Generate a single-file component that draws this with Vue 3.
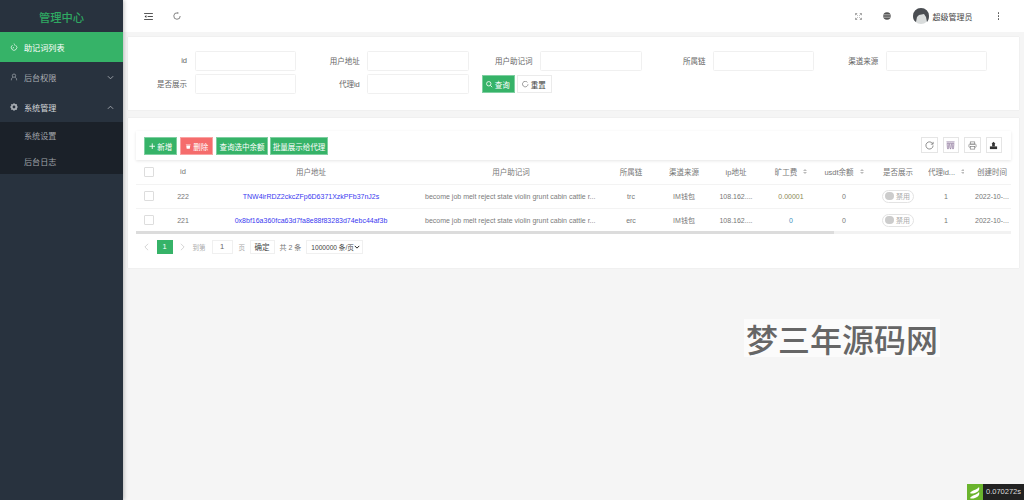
<template>
  <div class="layout">
    <aside class="side">
      <div class="logo">管理中心</div>
      <a class="menu-item active">
        <svg class="mi" viewBox="0 0 12 12"><path d="M6 .8c.4 1.400 1.300 1.800 1.300 3M3.800 3.200A4.200 4.200 0 1 0 8.600 3.400M6 6.500a1.500 1.500 0 0 0-1.500 1.600" fill="none" stroke="currentColor" stroke-width="1"/></svg>
        <span>助记词列表</span>
      </a>
      <a class="menu-item">
        <svg class="mi" viewBox="0 0 12 12"><circle cx="6" cy="4" r="2.500" fill="none" stroke="currentColor"/><path d="M2 11c0-3 1-4 2.500-4.500M10 11c0-3-1-4-2.500-4.500" fill="none" stroke="currentColor"/></svg>
        <span>后台权限</span>
        <svg class="arrow" viewBox="0 0 8 8"><path d="M1 2.500l3 3 3-3" fill="none" stroke="currentColor"/></svg>
      </a>
      <a class="menu-item">
        <svg class="mi" viewBox="0 0 12 12"><circle cx="6" cy="6" r="3.500" fill="none" stroke="currentColor" stroke-width="2.800"/><path d="M6 .3v2M6 9.700v2M.3 6h2M9.700 6h2M2 2l1.400 1.400M8.600 8.600L10 10M2 10l1.400-1.400M8.600 3.400L10 2" stroke="currentColor" stroke-width="1.500"/></svg>
        <span class="strong">系统管理</span>
        <svg class="arrow" viewBox="0 0 8 8"><path d="M1 5.500l3-3 3 3" fill="none" stroke="currentColor"/></svg>
      </a>
      <div class="submenu">
        <a>系统设置</a>
        <a>后台日志</a>
      </div>
    </aside>

    <div class="right">
      <header class="top">
        <svg class="ti first" viewBox="0 0 10 8"><path d="M0 .5h10M4 4h6M0 7.500h10" stroke="#333" stroke-width="1"/><path d="M2.600 2.300L.6 4l2 1.700z" fill="#333"/></svg>
        <svg class="ti reload" viewBox="0 0 10 10"><path d="M5.500 1.100A4 4 0 1 0 9 5" fill="none" stroke="#666" stroke-width="1"/><path d="M5.500 0v2.400L7.300 1.200z" fill="#666"/></svg>
        <div class="grow"></div>
        <svg class="ti small" viewBox="0 0 8 8"><path d="M.5 2.500v-2h2M5.500.5h2v2M7.500 5.500v2h-2M2.500 7.500h-2v-2M3 3L1.500 1.500M5 3l1.500-1.500M3 5L1.500 6.500M5 5l1.500 1.500" fill="none" stroke="#777" stroke-width=".8"/></svg>
        <svg class="ti globe" viewBox="0 0 8 8"><circle cx="4" cy="4" r="3.800" fill="#555"/><path d="M.3 2.800h7.400M.3 5.200h7.400" stroke="#ddd" stroke-width=".7"/></svg>
        <svg class="avatar" viewBox="0 0 16 16">
          <circle cx="8" cy="8" r="8" fill="#d9dcdc"/>
          <path d="M0 8a8 8 0 0 1 16 0c0 3-1 5-2 6l-1-5-2-3-5 1-2 2-1 5C1 13 0 11 0 8z" fill="#4a4d52"/>
        </svg>
        <span class="uname">超级管理员</span>
        <span class="kebab"><i></i><i></i><i></i></span>
      </header>

      <main class="content">
        <section class="card search">
          <div class="field" v-for="f in fields" :key="f">
            <label>{{ f }}</label>
            <div class="input"></div>
          </div>
          <div class="search-btns">
            <button class="btn green">
              <svg viewBox="0 0 8 8"><circle cx="3.400" cy="3.400" r="2.700" fill="none" stroke="currentColor"/><path d="M5.400 5.400l2.200 2.200" stroke="currentColor"/></svg>
              查询
            </button>
            <button class="btn plain">
              <svg viewBox="0 0 8 8"><path d="M6.700 1.700A3.400 3.400 0 1 0 7.400 4" fill="none" stroke="#666" stroke-width=".8"/></svg>
              重置
            </button>
          </div>
        </section>

        <section class="card list">
          <div class="toolbar">
            <button class="btn green">
              <svg viewBox="0 0 8 8"><path d="M4 .5v7M.5 4h7" stroke="currentColor" stroke-width="1.100"/></svg>
              新增
            </button>
            <button class="btn red">
              <svg viewBox="0 0 8 8"><path d="M1.500 3h5l-.6 4H2.100z" fill="currentColor"/><path d="M1 2h6" stroke="currentColor" stroke-width=".6"/></svg>
              删除
            </button>
            <button class="btn green">查询选中余额</button>
            <button class="btn green narrow-gap">批量展示给代理</button>
            <div class="grow"></div>
            <span class="tool">
              <svg viewBox="0 0 10 10"><path d="M8.500 3A4 4 0 1 0 9 5" fill="none" stroke="#666" stroke-width=".8"/><path d="M9 1v2.500H6.500" fill="none" stroke="#666" stroke-width=".8"/></svg>
            </span>
            <span class="tool">
              <svg viewBox="0 0 10 10"><path d="M.5 1h9M1.200 2.500h2l-.4 5-.6 1.500-.6-1.500zM4 2.500h2l-.4 5L5 9l-.6-1.500zM6.800 2.500h2l-.4 5L7.800 9l-.6-1.500z" fill="none" stroke="#7a5f8a" stroke-width=".7"/></svg>
            </span>
            <span class="tool">
              <svg viewBox="0 0 10 10"><rect x="2.500" y="1" width="5" height="2.500" fill="none" stroke="#777" stroke-width=".7"/><rect x="1" y="3.500" width="8" height="3.500" rx=".8" fill="none" stroke="#777" stroke-width=".7"/><rect x="2.500" y="6" width="5" height="3" fill="#fff" stroke="#777" stroke-width=".7"/></svg>
            </span>
            <span class="tool">
              <svg viewBox="0 0 10 10"><path d="M1 6h8v3H1z" fill="#333"/><path d="M3.500 6V3H2.800L5 .8 7.200 3H6.500v3z" fill="#333"/></svg>
            </span>
          </div>

          <div class="table-wrap">
            <table>
              <colgroup>
                <col v-for="(c, i) in columns" :key="i" :style="{ width: c.width + 'px' }" />
              </colgroup>
              <thead>
                <tr>
                  <th><span class="check"></span></th>
                  <th v-for="c in columns.slice(1)" :key="c.title">
                    <span class="th-in">{{ c.title }}<span v-if="c.sort" class="sort"><i class="up"></i><i class="down"></i></span></span>
                  </th>
                </tr>
              </thead>
              <tbody>
                <tr v-for="r in rows" :key="r.id">
                  <td><span class="check"></span></td>
                  <td>{{ r.id }}</td>
                  <td class="addr">{{ r.addr }}</td>
                  <td class="words"><span>become job melt reject state violin grunt cabin cattle r...</span></td>
                  <td>{{ r.chain }}</td>
                  <td>IM钱包</td>
                  <td>108.162....</td>
                  <td :class="r.fee === '0' ? 'blue' : 'olive'">{{ r.fee }}</td>
                  <td>0</td>
                  <td><span class="switch"><i></i>禁用</span></td>
                  <td>1</td>
                  <td class="nowrap">2022-10-...</td>
                </tr>
              </tbody>
            </table>
          </div>
          <div class="scroll"><div class="thumb"></div></div>

          <div class="pager">
            <svg class="chev" viewBox="0 0 6 10"><path d="M5 1L1 5l4 4" fill="none" stroke="#ccc"/></svg>
            <span class="page-no">1</span>
            <svg class="chev" viewBox="0 0 6 10"><path d="M1 1l4 4-4 4" fill="none" stroke="#ccc"/></svg>
            <span class="muted goto">到第</span>
            <span class="page-input">1</span>
            <span class="muted">页</span>
            <span class="confirm">确定</span>
            <span class="total">共 2 条</span>
            <span class="size">1000000 条/页
              <svg viewBox="0 0 8 8"><path d="M1 2.500l3 3 3-3" fill="none" stroke="#222" stroke-width="1.300"/></svg>
            </span>
          </div>
        </section>
      </main>
    </div>

    <div class="watermark">梦三年源码网</div>
    <div class="trace">
      <span class="trace-logo">
        <svg viewBox="0 0 16 16"><path d="M3 9c2-3 7-3 9-6 1 3-1 5-4 6-2 .6-4 1-5 0zM3 14c2-3 7-3 9-6 1 3-1 5-4 6-2 .6-4 1-5 0z" fill="#fff"/></svg>
      </span>
      <span class="trace-time">0.070272s</span>
    </div>
  </div>
</template>

<script setup>
const fields = ['id', '用户地址', '用户助记词', '所属链', '渠道来源', '是否展示', '代理id']

const columns = [
  { title: '', width: 26 },
  { title: 'id', width: 42 },
  { title: '用户地址', width: 214 },
  { title: '用户助记词', width: 186 },
  { title: '所属链', width: 54 },
  { title: '渠道来源', width: 52 },
  { title: 'ip地址', width: 52 },
  { title: '旷工费', width: 58, sort: true },
  { title: 'usdt余额', width: 48, sort: true },
  { title: '是否展示', width: 60 },
  { title: '代理id...', width: 36, sort: true },
  { title: '创建时间', width: 56 },
]

const rows = [
  { id: 222, addr: 'TNW4irRDZ2ckcZFp6D6371XzkPFb37nJ2s', chain: 'trc', fee: '0.00001' },
  { id: 221, addr: '0x8bf16a360fca63d7fa8e88f83283d74ebc44af3b', chain: 'erc', fee: '0' },
]
</script>

<style>
html, body { background: #f5f5f5; }
</style>

<style scoped>
.layout {
  position: relative;
  display: flex;
  width: 1024px;
  height: 500px;
  overflow: hidden;
  background: #f5f5f5;
  font-family: "Liberation Sans", "Noto Sans CJK SC", sans-serif;
  font-size: 7.5px;
  color: #666;
  opacity: .999;
}
.side {
  width: 123px;
  flex: none;
  background: #28323e;
  box-shadow: 1px 0 4px rgba(0, 0, 0, .25);
  z-index: 2;
}
.logo {
  height: 32px;
  line-height: 37px;
  text-align: center;
  font-size: 11.300px;
  font-weight: 500;
  color: #2fa862;
}
.menu-item {
  height: 30px;
  display: flex;
  align-items: center;
  padding: 0 9px 0 10px;
  gap: 6px;
  font-size: 8.100px;
  color: #a8adb3;
}
.menu-item.active { background: #36b368; color: #fff; }
.menu-item .strong { color: #d5d8da; }
.mi { width: 8px; height: 8px; flex: none; }
.arrow { width: 7px; height: 7px; margin-left: auto; }
.submenu { background: #1b2129; }
.submenu a {
  display: flex;
  align-items: center;
  height: 26px;
  padding-left: 24px;
  font-size: 8.100px;
  color: #a0a4a9;
}
.right { flex: 1; min-width: 0; display: flex; flex-direction: column; }
.top {
  height: 32px;
  flex: none;
  background: #fff;
  display: flex;
  align-items: center;
  padding: 0 25px 0 21px;
}
.grow { flex: 1; }
.ti { flex: none; }
.first { width: 9px; height: 7px; }
.reload { width: 8px; height: 8px; margin-left: 20px; }
.small { width: 7px; height: 7px; }
.globe { width: 8px; height: 8px; margin-left: 21px; }
.avatar { width: 16px; height: 16px; margin-left: 22px; flex: none; }
.uname { margin-left: 4px; font-size: 8px; color: #444; }
.kebab {
  margin-left: 25px;
  display: flex;
  flex-direction: column;
  gap: 1.500px;
}
.kebab i { width: 1.500px; height: 1.500px; background: #555; border-radius: 50%; }
.content {
  flex: 1;
  padding: 5px 5px 0;
  display: flex;
  flex-direction: column;
  gap: 8px;
}
.card { background: #fff; box-shadow: 0 0 1px rgba(0, 0, 0, .12); box-sizing: border-box; }
.search {
  height: 73px;
  padding-top: 14px;
  display: grid;
  grid-template-columns: repeat(5, 172.800px);
  grid-auto-rows: 19.500px;
  row-gap: 3.500px;
  align-content: start;
}
.field { display: flex; align-items: center; }
.field label { width: 59px; text-align: right; color: #666; }
.input {
  width: 101.500px;
  height: 19.500px;
  margin-left: 7.500px;
  border: 1px solid #f0f0f0;
  border-radius: 1.500px;
  box-sizing: border-box;
}
.search-btns {
  display: flex;
  align-items: center;
  gap: 2px;
  padding-left: 8px;
  padding-top: 1px;
}
.btn {
  height: 18px;
  border: 1px solid transparent;
  box-sizing: border-box;
  display: inline-flex;
  align-items: center;
  justify-content: center;
  gap: 2px;
  padding: 0;
  font: inherit;
  color: #fff;
  white-space: nowrap;
}
.btn svg { width: 6.500px; height: 6.500px; flex: none; }
.btn.green { background: #36b368; border-color: #7fcfa1; }
.btn.red { background: #f56c6c; border-color: #f9a3a3; }
.btn.plain { background: #fff; border-color: #ebebeb; color: #444; }
.search-btns .green { width: 33px; }
.search-btns .plain { width: 35px; }
.list {
  height: 150px;
  padding: 13px 8px 0;
}
.toolbar {
  height: 29px;
  display: flex;
  align-items: flex-start;
  padding: 6px 9px 0 8px;
  box-sizing: border-box;
  gap: 3px;
  box-shadow: 0 1px 3px rgba(0, 0, 0, .1);
}
.toolbar .btn:nth-child(1), .toolbar .btn:nth-child(2) { width: 33px; }
.toolbar .btn:nth-child(3) { width: 52px; }
.toolbar .btn:nth-child(4) { width: 58px; margin-left: -1px; }
.tool {
  width: 16.500px;
  height: 16px;
  border: 1px solid #e5e5e5;
  box-sizing: border-box;
  display: flex;
  align-items: center;
  justify-content: center;
  margin-left: 2px;
}
.tool svg { width: 9px; height: 9px; }
.table-wrap { overflow: hidden; height: 71px; }
table {
  table-layout: fixed;
  border-collapse: collapse;
  width: 884px;
}
th, td {
  padding: 0;
  text-align: center;
  font-weight: 400;
  overflow: hidden;
  white-space: nowrap;
  border-bottom: 1px solid #f3f3f3;
  color: #777;
  font-size: 7px;
}
th { height: 23.500px; font-size: 7.500px; }
td { height: 23px; }
.th-in { display: inline-flex; align-items: center; gap: 5px; }
.check {
  display: block;
  width: 10px;
  height: 10px;
  margin: 0 auto 0 8px;
  border: 1px solid #ddd;
  border-radius: 1px;
  box-sizing: border-box;
}
.sort { display: inline-flex; flex-direction: column; gap: 1px; margin-left: 1px; }
.sort i { display: block; width: 0; height: 0; border-left: 2px solid transparent; border-right: 2px solid transparent; }
.sort .up { border-bottom: 2.500px solid #bbb; }
.sort .down { border-top: 2.500px solid #bbb; }
td.addr { color: #3a3af0; }
td.words { color: #7b7b7b; text-align: left; }
td.words span { display: block; padding-left: 7px; }
td.olive { color: #8a8a55; }
td.blue { color: #3f8fc0; }
.switch {
  display: inline-flex;
  align-items: center;
  gap: 2.500px;
  width: 32px;
  height: 13px;
  box-sizing: border-box;
  border: 1px solid #e3e3e3;
  border-radius: 7px;
  padding-left: 2px;
  color: #aaa;
  vertical-align: middle;
}
.switch i { width: 8.500px; height: 8.500px; background: #ccc; border-radius: 50%; }
.scroll { height: 3px; margin-top: -.5px; background: #f2f2f2; }
.thumb { width: 698px; height: 3px; background: #dcdcdc; }
.pager {
  display: flex;
  align-items: center;
  height: 14px;
  margin-top: 6px;
  padding-left: 8px;
  color: #888;
}
.chev { width: 5px; height: 8px; flex: none; }
.page-no {
  width: 16px;
  height: 14px;
  margin: 0 7px 0 7.500px;
  background: #36b368;
  color: #fff;
  display: flex;
  align-items: center;
  justify-content: center;
}
.goto { margin-left: 8px; }
.muted { color: #aaa; font-size: 6.500px; }
.page-input {
  width: 21px;
  height: 14px;
  margin: 0 6px;
  border: 1px solid #f0f0f0;
  box-sizing: border-box;
  display: flex;
  align-items: center;
  justify-content: center;
  color: #666;
}
.confirm {
  width: 25px;
  height: 14px;
  margin-left: 4.500px;
  border: 1px solid #f0f0f0;
  box-sizing: border-box;
  display: flex;
  align-items: center;
  justify-content: center;
  color: #444;
}
.total { margin-left: 5px; color: #777; font-size: 7px; }
.size {
  margin-left: 5px;
  width: 57px;
  height: 14px;
  border: 1px solid #f0f0f0;
  box-sizing: border-box;
  display: flex;
  align-items: center;
  justify-content: space-between;
  padding: 0 2px 0 4px;
  color: #444;
  white-space: nowrap;
  font-size: 6.600px;
}
.size svg { width: 6px; height: 6px; flex: none; }
.nowrap { white-space: nowrap; }
.watermark {
  position: absolute;
  left: 744px;
  top: 319px;
  width: 196px;
  height: 38px;
  background: #fbfbfb;
  color: #666;
  font-family: "Noto Sans CJK SC", sans-serif;
  font-size: 32px;
  font-weight: 500;
  line-height: 38px;
  text-align: center;
  white-space: nowrap;
}
.trace {
  position: absolute;
  right: 0;
  bottom: 0;
  display: flex;
  height: 16px;
}
.trace-logo { width: 16px; height: 16px; background: #6ab42d; }
.trace-logo svg { display: block; width: 16px; height: 16px; }
.trace-time {
  width: 41px;
  background: #222;
  color: #ddd;
  font-size: 7.500px;
  line-height: 16px;
  text-align: center;
}
</style>
